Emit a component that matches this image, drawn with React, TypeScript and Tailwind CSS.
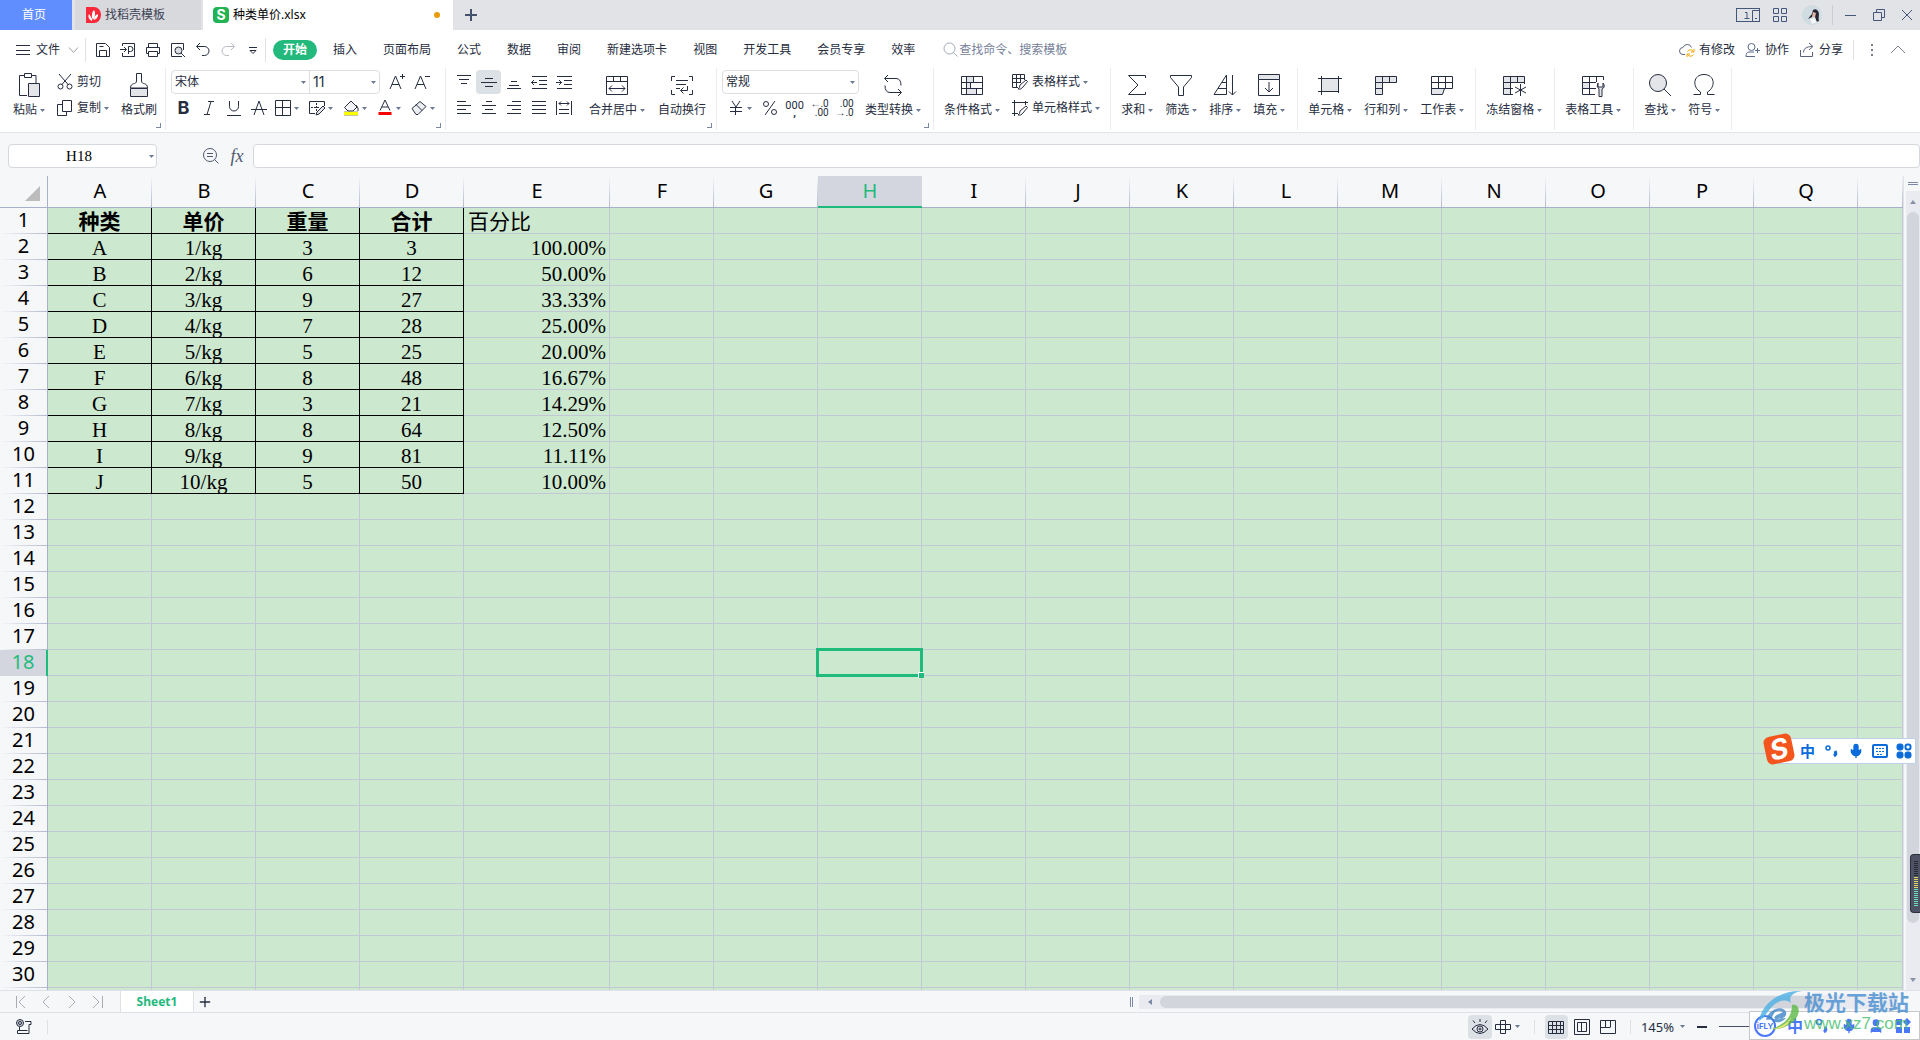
import type { ReactNode } from 'react';
import { Mic, Plus, User } from 'lucide-react';

const columns = ['A', 'B', 'C', 'D', 'E', 'F', 'G', 'H', 'I', 'J', 'K', 'L', 'M', 'N', 'O', 'P', 'Q', ''];

const data = [
  ['种类', '单价', '重量', '合计', '百分比'],
  ['A', '1/kg', '3', '3', '100.00%'],
  ['B', '2/kg', '6', '12', '50.00%'],
  ['C', '3/kg', '9', '27', '33.33%'],
  ['D', '4/kg', '7', '28', '25.00%'],
  ['E', '5/kg', '5', '25', '20.00%'],
  ['F', '6/kg', '8', '48', '16.67%'],
  ['G', '7/kg', '3', '21', '14.29%'],
  ['H', '8/kg', '8', '64', '12.50%'],
  ['I', '9/kg', '9', '81', '11.11%'],
  ['J', '10/kg', '5', '50', '10.00%'],
];

const menus = ['开始', '插入', '页面布局', '公式', '数据', '审阅', '新建选项卡', '视图', '开发工具', '会员专享', '效率'];

type IconProps = { children: ReactNode; size?: 'sm' | 'lg'; className?: string };

// sm icons are drawn on a 16 grid, lg icons on a 24 grid
function Icon({ children, size = 'sm', className = 'text-[#262d40]' }: IconProps) {
  const box = size === 'lg' ? 24 : 16;
  return (
    <svg
      width={box}
      height={box}
      viewBox={`0 0 ${box} ${box}`}
      fill="none"
      stroke="currentColor"
      className={`shrink-0 ${className}`}
      aria-hidden="true"
    >
      {children}
    </svg>
  );
}

function Arrow() {
  return (
    <svg width="5" height="3" viewBox="0 0 5 3" className="shrink-0 fill-[#6b7894]" aria-hidden="true">
      <path d="M0 0h5L2.5 3z" />
    </svg>
  );
}

function Group({ children, className = 'pl-2.5 pr-3', corner = false }: { children: ReactNode; className?: string; corner?: boolean }) {
  return (
    <div className={`relative flex h-[62px] shrink-0 items-start border-r border-[#ebecef] ${className}`}>
      {children}
      {corner && <span className="absolute bottom-0.5 right-1 h-[5px] w-[5px] border-b border-r border-[#7c87a0]" />}
    </div>
  );
}

function BigButton({ label, arrow = true, children }: { label: string; arrow?: boolean; children: ReactNode }) {
  return (
    <button className="flex shrink-0 flex-col items-center gap-[5px] pt-[5px]">
      <Icon size="lg">{children}</Icon>
      <span className="flex items-center gap-[3px] whitespace-nowrap">
        {label}
        {arrow && <Arrow />}
      </span>
    </button>
  );
}

function RowButton({ label, arrow = true, children }: { label: string; arrow?: boolean; children: ReactNode }) {
  return (
    <button className="flex h-6 items-center gap-1 whitespace-nowrap">
      <Icon>{children}</Icon>
      <span className="flex items-center gap-[3px]">
        {label}
        {arrow && <Arrow />}
      </span>
    </button>
  );
}

function Tool({ label, active = false, children }: { label: string; active?: boolean; children: ReactNode }) {
  return (
    <button
      aria-label={label}
      className={`flex h-6 w-[25px] shrink-0 items-center justify-center rounded-sm ${active ? 'bg-[#dce1e6]' : ''}`}
    >
      {children}
    </button>
  );
}

function DropTool({ label, children }: { label: string; children: ReactNode }) {
  return (
    <button aria-label={label} className="flex h-6 shrink-0 items-center gap-[3px]">
      {children}
      <Arrow />
    </button>
  );
}

function Select({ label, options, className }: { label: string; options: string[]; className: string }) {
  return (
    <div className={`flex items-center pr-[3px] ${className}`}>
      <select aria-label={label} className="w-full min-w-0 appearance-none bg-transparent pl-[3px] outline-none">
        {options.map((o) => (
          <option key={o}>{o}</option>
        ))}
      </select>
      <Arrow />
    </div>
  );
}

function TitleBar() {
  return (
    <header className="flex h-[30px] shrink-0 items-stretch bg-[#e1e3e7]">
      <button className="w-[72px] bg-[#618eff] pr-1 text-white">首页</button>
      <button className="ml-[3px] flex w-[126px] items-center gap-[3px] bg-[#d8d9dd] pl-[10px] text-[#3c4254]">
        <svg width="17" height="16" viewBox="0 0 17 16" aria-hidden="true">
          <path d="M1 0h8a7 8 0 0 1 0 16H1z" fill="#fa2839" />
          <path d="M7 14C3 12 3 9 4 7c1 1 2 3 3 5zM8 13C6 9 7 5 9 3c2 3 1 7-1 10zM9 13c0-3 1-5 4-6 0 3-1 5-4 6z" fill="#fff" />
        </svg>
        找稻壳模板
      </button>
      <button className="ml-0.5 flex w-[250px] items-center gap-1 bg-white pl-[10px] text-black">
        <span className="flex h-4 w-4 items-center justify-center rounded-sm bg-[#1fb354] font-[Inter] text-sm leading-4 font-bold text-white">
          S
        </span>
        种类单价.xlsx
        <span className="ml-auto mr-[13px] h-1.5 w-1.5 rounded-full bg-[#e89b06]" />
      </button>
      <button aria-label="新建标签" className="ml-1.5 flex w-6 items-center justify-center text-[#44506c]">
        <Icon className="text-[#44506c]"><path d="M8 2v12M2 8h12" strokeWidth="2" /></Icon>
      </button>
      <div className="ml-auto flex items-center text-[#44567a]">
        <button aria-label="窗口">
          <svg width="24" height="14" viewBox="0 0 24 14" fill="none" stroke="currentColor" aria-hidden="true">
            <rect x=".5" y=".5" width="23" height="13" />
            <path d="M9 4.500h2v6M8.500 10.500h5M16.500 13V2.500h7M19 10.500h2" />
          </svg>
        </button>
        <button aria-label="应用" className="ml-3">
          <Icon className="text-[#44567a]">
            <path d="M1.500 1.500h5v5h-5zM9.500 1.500h5v5h-5zM1.500 9.500h5v5h-5zM9.500 9.500h5v5h-5z" />
          </Icon>
        </button>
        <button aria-label="账号" className="ml-3.5">
          <svg width="20" height="20" viewBox="0 0 20 20" aria-hidden="true">
            <circle cx="10" cy="10" r="10" fill="#cfdde2" />
            <path d="M11 5q3-2 5 1c2 3 0 6 1 10l-3 1-1-6-3 1-4 2q2-3 4-5z" fill="#262531" />
            <path d="M11 7l3 1-1 4-3 0z" fill="#e5b7a6" />
            <path d="M8 14l5-1 2 4-5 2z" fill="#f4f6f7" />
          </svg>
        </button>
        <span className="mx-2.5 h-5 w-px bg-[#c9ccd3]" />
        <button aria-label="最小化" className="w-7"><Icon className="text-[#44567a]"><path d="M2 8.500h11" /></Icon></button>
        <button aria-label="还原" className="w-7">
          <Icon className="text-[#44567a]"><path d="M2.500 5.500h8v8h-8zM5.500 5.500v-3h8v8h-3" /></Icon>
        </button>
        <button aria-label="关闭" className="w-[21px]">
          <Icon className="text-[#44567a]"><path d="M3 3l10 10M13 3L3 13" /></Icon>
        </button>
      </div>
    </header>
  );
}

function MenuBar() {
  return (
    <nav className="flex h-[38px] shrink-0 items-center bg-white pt-0.5">
      <button className="flex items-center gap-[5px] pl-[15px]">
        <Icon><path d="M1 3.500h14M1 8.500h14M1 12.500h14" /></Icon>
        文件
        <Icon className="text-[#9a9fab]"><path d="M4 5.500l4.500 5 4.500-5" /></Icon>
      </button>
      <span className="mx-1 h-6 w-px bg-[#dfe1e5]" />
      <Tool label="保存">
        <Icon><path d="M1.500 1.500h9l4 4v9h-13zM4.500 14V8.500h7V14M4.500 4.500h4" /></Icon>
      </Tool>
      <Tool label="输出为PDF">
        <Icon><path d="M2.500 4V1.500h12v13h-12V11M0 7.500h6M4 5l2.500 2.500L4 10M8.500 12V4.500h2a2 2 0 0 1 0 5h-2" /></Icon>
      </Tool>
      <Tool label="打印">
        <Icon><path d="M3.500 5V1.500h9V5M3.500 11.500h-2v-6h13v6h-2M3.500 9.500h9v5h-9z" /></Icon>
      </Tool>
      <Tool label="打印预览">
        <Icon><path d="M12 14.500H1.500v-13h12V8" /><circle cx="8.500" cy="8.500" r="3.500" fill="#dedfe3" /><path d="M11 11l4 4" /></Icon>
      </Tool>
      <Tool label="撤销"><Icon><path d="M5 1L1.500 4.500 5 8M2 4.500h7.500a4.500 4.500 0 0 1 0 9H7" /></Icon></Tool>
      <Tool label="恢复">
        <Icon className="text-[#b9bcc4]"><path d="M11 1l3.500 3.500L11 8M14 4.500H6.500a4.500 4.500 0 0 0 0 9H9" /></Icon>
      </Tool>
      <Tool label="更多"><Icon><path d="M4 5.500h8M5 8.500l3 3 3-3z" /></Icon></Tool>
      <span className="mr-[17px] h-6 w-px bg-[#dfe1e5]" />
      <div className="flex items-center gap-[26px]">
        {menus.map((m, i) => (
          <button
            key={m}
            className={i === 0 ? '-mx-2.5 h-5 rounded-full bg-[#23b97c] px-2.5 font-bold text-white' : 'whitespace-nowrap'}
          >
            {m}
          </button>
        ))}
      </div>
      <button className="ml-7 flex items-center whitespace-nowrap text-[#76809a]">
        <Icon className="text-[#a0a8b8]"><circle cx="6.500" cy="6.500" r="5.500" /><path d="M10.500 10.500l4 4" /></Icon>
        查找命令、搜索模板
      </button>
      <div className="ml-auto flex items-center gap-2.5 pr-[14px]">
        <button className="flex items-center gap-1">
          <Icon>
            <path d="M6 12.500H4a3.500 3.500 0 0 1 0-7 4.500 4.500 0 0 1 8.500 0" stroke="#5a6478" />
            <path d="M8.500 9.500a3.500 3.500 0 0 1 6 0M15 7v3h-3M14.500 12.500a3.500 3.500 0 0 1-6 0M8 15v-3h3" stroke="#f5a300" />
          </Icon>
          有修改
        </button>
        <button className="flex items-center gap-1">
          <Icon className="text-[#5a6a88]"><circle cx="6.500" cy="5" r="3.500" /><path d="M9 10H4q-3 0-3 4.500h9M10 8.500h5M12.500 6v5" /></Icon>
          协作
        </button>
        <button className="flex items-center gap-1">
          <Icon className="text-[#5a6478]"><path d="M1.500 8v6.500h12V10M4.500 10.500q0-6 8.500-6M10 1l4 3.500L10 8" /></Icon>
          分享
        </button>
        <span className="h-5 w-px bg-[#dfe1e5]" />
        <button aria-label="更多选项"><Icon><path d="M7 3h2M7 8h2M7 13h2" strokeWidth="2" stroke="#7a7f8b" /></Icon></button>
        <button aria-label="收起功能区"><Icon className="text-[#7a7f8b]"><path d="M1 11l7-7 7 7" /></Icon></button>
      </div>
    </nav>
  );
}

function Ribbon() {
  return (
    <div className="relative flex h-16 shrink-0 overflow-hidden bg-white">
      <Group className="gap-3 pl-[13px] pr-2" corner>
        <BigButton label="粘贴">
          <path d="M8 2.500H2.500v20H10M17 2.500h2V10M7.500.500h7v4h-7zM14 2.500h5" />
          <path d="M11.500 10.500h11v13h-11z" fill="#e3e5e9" />
        </BigButton>
        <div className="flex flex-col gap-0.5 pt-0.5">
          <RowButton label="剪切" arrow={false}>
            <path d="M2 0l9.500 11M14 0L4.500 11" /><circle cx="3.500" cy="12.500" r="2.500" /><circle cx="12.500" cy="12.500" r="2.500" />
          </RowButton>
          <RowButton label="复制"><path d="M5.500 4.500h-5v11h9v-4M5.500.500h9v11h-9z" /></RowButton>
        </div>
        <BigButton label="格式刷" arrow={false}>
          <path d="M9.500 8V.500h5V8c0 4 6 1 6 7H3.500c0-6 6-3 6-7z" />
          <path d="M3.500 15.500h17v8h-17z" fill="#e3e5e9" />
        </BigButton>
      </Group>

      <Group className="flex-col gap-0.5 pl-[5px] pr-2.5 pt-0.5" corner>
        <div className="flex items-center">
          <div className="mr-1 flex h-6 w-[209px] shrink-0 items-stretch rounded-sm border border-[#dcdee4]">
            <Select label="字体" options={['宋体', '黑体', '楷体']} className="flex-1" />
            <Select label="字号" options={['11', '12', '14']} className="w-[70px] border-l border-[#dcdee4] font-[Inter] text-sm" />
          </div>
          <Tool label="增大字号">
            <Icon><path d="M1 15L6.500 2 12 15M3 10.500h7M11 2.500h5M13.500 0v5" /></Icon>
          </Tool>
          <Tool label="减小字号"><Icon><path d="M1 15L6.500 2 12 15M3 10.500h7M11 2.500h5" /></Icon></Tool>
        </div>
        <div className="flex items-center">
          <Tool label="加粗"><span className="font-[Inter] text-lg leading-6 font-bold">B</span></Tool>
          <Tool label="倾斜"><Icon><path d="M7 1.500h6M3 14.500h6M10 1.500L6 14.500" /></Icon></Tool>
          <Tool label="下划线"><Icon><path d="M3.500 1v5.500a4.500 4.500 0 0 0 9 0V1M1 15.500h14" /></Icon></Tool>
          <Tool label="删除线"><Icon><path d="M3 15L8 1l5 14M0 9.500h16" /></Icon></Tool>
          <div className="ml-1 flex gap-2.5">
            <DropTool label="边框"><Icon><path d="M.500.500h15v15H.500zM7.500 1v14M1 7.500h14" /></Icon></DropTool>
            <DropTool label="绘图边框">
              <Icon><path d="M15.500 6V1.500H.500v12H6" /><path d="M7.500 3v8M2 7.500h9" strokeDasharray="2 1" /><path d="M7 15l1-3 6-6 2 2-6 6z" fill="#e3e5e9" /></Icon>
            </DropTool>
            <DropTool label="填充颜色">
              <Icon><path d="M3 6l5-5 6 6-4 4H5L1.500 7.500z" fill="#f3f4f6" /><path d="M13 5q3 3 2 6" /><path d="M1 13.500h14" stroke="#8a8c50" strokeWidth="4" /><path d="M1 13.500h14" stroke="#fafa00" strokeWidth="3" /></Icon>
            </DropTool>
            <DropTool label="字体颜色">
              <Icon><path d="M3 10.500L8 0l5 10.500M5 7h6" /><path d="M1.500 13.500h13" stroke="#fa0000" strokeWidth="3" /></Icon>
            </DropTool>
            <DropTool label="清除"><Icon><path d="M1 8.500L9 1.500l6 5-8 8H5z" fill="#eceef1" /><path d="M5 4.500l6 6" /></Icon></DropTool>
          </div>
        </div>
      </Group>

      <Group className="gap-[13px] pl-[5px] pr-2.5" corner>
        <div className="grid grid-cols-5 gap-y-0.5 pt-0.5">
          <Tool label="顶端对齐"><Icon><path d="M1 1.500h14M3 5.500h10M5 9.500h6" /></Icon></Tool>
          <Tool label="垂直居中" active><Icon><path d="M4 4.500h8M0 8.500h16M4 12.500h8" /></Icon></Tool>
          <Tool label="底端对齐"><Icon><path d="M5 7.500h6M3 11.500h10M1 14.500h14" /></Icon></Tool>
          <Tool label="减少缩进"><Icon><path d="M1 2.500h15M8 6.500h8M8 10.500h8M1 14.500h15M6 8.500H0M3 6L.500 8.500 3 11" /></Icon></Tool>
          <Tool label="增加缩进"><Icon><path d="M1 2.500h15M8 6.500h8M8 10.500h8M1 14.500h15M0 8.500h6M3 6l2.500 2.500L3 11" /></Icon></Tool>
          <Tool label="左对齐"><Icon><path d="M1 1.500h9M1 5.500h14M1 9.500h9M1 13.500h14" /></Icon></Tool>
          <Tool label="水平居中"><Icon><path d="M5 1.500h6M1 5.500h14M4 9.500h8M1 13.500h14" /></Icon></Tool>
          <Tool label="右对齐"><Icon><path d="M6 1.500h9M1 5.500h14M6 9.500h9M1 13.500h14" /></Icon></Tool>
          <Tool label="两端对齐"><Icon><path d="M1 1.500h14M1 5.500h14M1 9.500h14M1 13.500h14" /></Icon></Tool>
          <Tool label="分散对齐"><Icon><path d="M.500 1v14M15.500 1v14M3 3.500h10M5 1.500l-2 2 2 2M11 1.500l2 2-2 2M3 9.500h10M3 13.500h10" /></Icon></Tool>
        </div>
        <BigButton label="合并居中">
          <path d="M1.500 3.500h21v18h-21zM1 8.500h22M8.500 3v6M15.500 3v6M4 15.500h16M7 12.500l-3 3 3 3M17 12.500l3 3-3 3" />
        </BigButton>
        <BigButton label="自动换行" arrow={false}>
          <path d="M5 3.500H1.500V8M19 3.500h3.500V8M5 21.500H1.500V17M19 21.500h3.500V17M6 7.500h12M6 11.500h10M6 15.500h4M17.500 13v4.500H11M13.500 14.500l-3 3 3 3" />
        </BigButton>
      </Group>

      <Group className="gap-1.5 pl-[5px] pr-3" corner>
        <div className="flex flex-col gap-0.5 pt-0.5">
          <div className="flex h-6 w-[137px] items-stretch rounded-sm border border-[#dcdee4]">
            <Select label="数字格式" options={['常规', '数值', '货币']} className="flex-1" />
          </div>
          <div className="flex items-center">
            <div className="w-[35px] pl-1.5">
              <DropTool label="货币"><Icon><path d="M4 1l4 6 4-6M7.500 7v8M2 7.500h12M2 11.500h12" /></Icon></DropTool>
            </div>
            <Tool label="百分比样式">
              <Icon><circle cx="4" cy="4" r="2.500" /><circle cx="12" cy="12" r="2.500" /><path d="M13 1L3 15" /></Icon>
            </Tool>
            <Tool label="千位分隔">
              <span className="flex flex-col items-center font-[Roboto] text-[11px] leading-[9px]"><span>000</span><span className="leading-[5px] font-bold">,</span></span>
            </Tool>
            <Tool label="增加小数位数">
              <span className="flex flex-col items-end font-[Roboto] text-[10px] leading-[9px]"><span>←.0</span><span>.00</span></span>
            </Tool>
            <Tool label="减少小数位数">
              <span className="flex flex-col items-end font-[Roboto] text-[10px] leading-[9px]"><span>.00</span><span>→.0</span></span>
            </Tool>
          </div>
        </div>
        <BigButton label="类型转换">
          <path d="M7 2L3.500 5.500 7 9M4 5.500h11q5 0 5 7M17 16l3.500 3.500L17 23M20 19.500H9q-5 0-5-7" />
        </BigButton>
      </Group>

      <Group className="gap-3 pl-2.5 pr-2.5">
        <BigButton label="条件格式">
          <path d="M7 4h6v5H7zM7 10h3v5H7zM7 16h9v5H7z" fill="#e3e5e9" stroke="none" />
          <path d="M1.500 3.500h21v18h-21zM1 9.500h22M1 15.500h22M6.500 3v19M13.500 3v6M10.500 9v6M16.500 15v6" />
        </BigButton>
        <div className="flex flex-col items-start gap-0.5 pt-0.5">
          <RowButton label="表格样式">
            <path d="M6 13.500H.500V.500h12V6M1 4.500h12M1 8.500h8M4.500 1v12M8.500 1v7" />
            <path d="M8 11l6-5 1.500 1.500L11 13q-2 3-5 2 2-1 2-4z" fill="#fff" />
          </RowButton>
          <RowButton label="单元格样式">
            <path d="M0 2.500h16M2.500 0v16M0 13.500h6M13.500 1v4" />
            <path d="M8 11l6-5 1.500 1.500L11 13q-2 3-5 2 2-1 2-4z" fill="#fff" />
          </RowButton>
        </div>
      </Group>

      <Group className="gap-3 pl-2.5 pr-3">
        <BigButton label="求和"><path d="M20.500 5V2.500h-17L13 12 3.500 21.500h17V19" /></BigButton>
        <BigButton label="筛选"><path d="M1.500 2.500h21v2L14.500 14v8.500h-5V14L1.500 4.500z" /></BigButton>
        <BigButton label="排序"><path d="M1 21.500L13.500 2v19.500zM5 15.500h8M9 9.500h4M19.500 2v20M16 18.500l3.500 3.500 3.500-3.500" /></BigButton>
        <BigButton label="填充">
          <path d="M1.500 1.500h21v5h-21z" fill="#e3e5e9" /><path d="M1.500 6.500v16h21v-16M12 9v10M8 15l4 4 4-4" />
        </BigButton>
      </Group>

      <Group className="gap-3 pl-2.5 pr-[11px]">
        <BigButton label="单元格">
          <path d="M3.500 5.500h17v13h-17z" fill="#e3e5e9" /><path d="M0 5.500h24M0 18.500h20M3.500 3v19M20.500 3v14M20.500 18v2" />
        </BigButton>
        <BigButton label="行和列">
          <path d="M1.500 3.500h21v6h-14v12h-7z" fill="#e3e5e9" /><path d="M1.500 9.500h7v-6M15.500 3v6M1 15.500h7" />
        </BigButton>
        <BigButton label="工作表">
          <path d="M1.500 15.500h13l-2 6h-11z" fill="#e3e5e9" /><path d="M1.500 3.500h21v12h-21zM1 9.500h22M8.500 3v12M15.500 3v12" />
        </BigButton>
      </Group>

      <Group>
        <BigButton label="冻结窗格">
          <path d="M1.500 3.500h21v6h-14v12h-7z" fill="#e3e5e9" stroke="none" />
          <path d="M22.500 11V3.500h-21v18H11M1 9.500h21M1 15.500h10M8.500 3v18M15.500 3v6M18.500 11v12M13 14l11 6M24 14l-11 6" />
        </BigButton>
      </Group>

      <Group>
        <BigButton label="表格工具">
          <path d="M1.500 9.500h7v6h-7z" fill="#e3e5e9" />
          <path d="M22.500 7V3.500h-21v18H14M1 9.500h14M1 15.500h14M8.500 3v18M15.500 3v6" />
          <path d="M17 10q-2 4 1 6v7.500h3V16q4-2 1-6v4h-5z" fill="#e3e5e9" />
        </BigButton>
      </Group>

      <Group className="gap-3 pl-2.5 pr-[11px]">
        <BigButton label="查找"><circle cx="10" cy="10" r="8.500" fill="#e3e5e9" /><path d="M16 16l7 7" /></BigButton>
        <BigButton label="符号">
          <path d="M1.500 21.500h7V19C0 14 1 1.500 12 1.500S24 14 15.500 19v2.500h7" />
        </BigButton>
      </Group>
    </div>
  );
}

function FormulaBar() {
  return (
    <div className="flex h-11 shrink-0 items-center border-t border-[#e3e4e6] bg-[#f5f7f9] pt-[3px] pl-2">
      <div className="flex h-6 w-[149px] shrink-0 items-center rounded-sm border border-[#d5d8de] bg-white pr-0.5">
        <input
          aria-label="名称框"
          defaultValue="H18"
          className="w-full min-w-0 text-center font-['Liberation_Serif',serif] text-[15px] text-black outline-none"
        />
        <button aria-label="选择名称"><Arrow /></button>
      </div>
      <button aria-label="浏览公式" className="ml-[46px]">
        <Icon className="text-[#50596e]"><circle cx="7" cy="7" r="6.500" /><path d="M11.500 11.500l4 4M4 5.500h6M4 8.500h6" /></Icon>
      </button>
      <button className="ml-2.5 mr-2 w-4 font-['Liberation_Serif',serif] text-lg leading-6 italic text-[#50596e]">fx</button>
      <input aria-label="编辑栏" className="h-6 min-w-0 flex-1 rounded-sm border border-[#d5d8de] bg-white px-2 outline-none" />
    </div>
  );
}

function cellClass(row: number, col: number) {
  const filled = row <= 11 && col < 4;
  let cls = 'h-[26px] border-r border-b p-0 pt-[3px] leading-[22px] ';
  cls += filled ? 'border-black text-center ' : 'border-[#c3c8d6] ';
  if (col === 4) cls += row === 1 ? 'pl-1 text-left ' : 'pr-[3px] text-right ';
  if (row === 1 && col < 4) cls += 'font-bold ';
  return cls;
}

function Grid() {
  const rows = Array.from({ length: 31 }, (_, i) => i + 1);
  return (
    <div className="min-w-0 flex-1 overflow-hidden border-r border-[#e0e2e8] bg-[#cce8cf]">
      <table className="w-full table-fixed border-separate border-spacing-0 font-['Liberation_Serif','Noto_Sans_CJK_SC',serif] text-[21px] text-black">
        <colgroup>
          <col className="w-12" />
          {columns.map((c, i) => (
            <col key={i} className={c === 'E' ? 'w-[146px]' : c ? 'w-[104px]' : ''} />
          ))}
        </colgroup>
        <thead className="font-['Noto_Sans',sans-serif] text-xl leading-7">
          <tr>
            <th className="h-8 border-r border-b border-[#a9b0cc] bg-[#f5f7f9] p-0 pr-[7px]">
              <svg width="15" height="15" viewBox="0 0 15 15" className="mt-1 ml-auto fill-[#bcbcbc]" aria-label="全选">
                <path d="M15 0v15H0z" />
              </svg>
            </th>
            {columns.map((c, i) => (
              <th
                key={i}
                className={
                  c === 'H'
                    ? 'h-8 border-b-2 border-[#1fbb7d] bg-[#d3d6de] p-0 font-normal text-[#1fbb7d]'
                    : 'h-8 border-b border-[#a9b0cc] bg-[#f5f7f9] bg-[linear-gradient(to_bottom,transparent,#b4bad0)] bg-[length:1px_100%] bg-right bg-no-repeat p-0 pb-px font-normal'
                }
              >
                {c}
              </th>
            ))}
          </tr>
        </thead>
        <tbody>
          {rows.map((r) => (
            <tr key={r}>
              <th
                className={
                  r === 18
                    ? "h-[26px] border-r-2 border-[#1fbb7d] bg-[#d3d6de] p-0 pb-[3px] font-['Noto_Sans',sans-serif] text-xl leading-[23px] font-normal text-[#1fbb7d]"
                    : "h-[26px] border-r border-[#a9b0cc] bg-[#f5f7f9] bg-[linear-gradient(to_right,transparent,#b4bad0)] bg-[length:100%_1px] bg-bottom bg-no-repeat p-0 pb-[3px] font-['Noto_Sans',sans-serif] text-xl leading-[23px] font-normal"
                }
              >
                {r < 31 ? r : ''}
              </th>
              {columns.map((c, i) => (
                <td key={i} className={cellClass(r, i) + (r === 18 && c === 'H' ? 'relative' : '')}>
                  {data[r - 1]?.[i]}
                  {r === 18 && c === 'H' && (
                    <div className="absolute -top-0.5 -left-0.5 -right-0.5 -bottom-0.5 border-[3px] border-[#1fbb7d]">
                      <span className="absolute -right-1 -bottom-1 h-1.5 w-1.5 border-t border-l border-white bg-[#1fbb7d]" />
                    </div>
                  )}
                </td>
              ))}
            </tr>
          ))}
        </tbody>
      </table>
    </div>
  );
}

function VerticalScroll() {
  return (
    <div className="flex w-4 shrink-0 flex-col bg-[#f5f7f9] pl-0.5">
      <div className="mx-0.5 mt-1.5 mb-1.5 h-[3px] border-y border-[#7c8aa5]" />
      <div className="flex flex-1 flex-col items-center bg-[#e9ebf0]">
        <button aria-label="向上滚动" className="flex h-[21px] items-center">
          <svg width="6" height="4" viewBox="0 0 6 4" className="fill-[#8893ab]"><path d="M3 0l3 4H0z" /></svg>
        </button>
        <div className="w-3 flex-[712] rounded-full bg-[#d3d5dd]" />
        <div className="flex-[47]" />
        <button aria-label="向下滚动" className="flex h-5 items-center">
          <svg width="6" height="4" viewBox="0 0 6 4" className="fill-[#8893ab]"><path d="M0 0h6L3 4z" /></svg>
        </button>
      </div>
    </div>
  );
}

function SheetBar() {
  return (
    <div className="flex h-[23px] shrink-0 items-center border-y border-[#dfe1e6] bg-[#f5f7f9]">
      <div className="flex items-center gap-[10px] pl-3">
        <button aria-label="第一张"><Icon className="text-[#a8abb3]"><path d="M4.500 2v12M13 2L7 8l6 6" /></Icon></button>
        <button aria-label="上一张"><Icon className="text-[#a8abb3]"><path d="M11 2L5 8l6 6" /></Icon></button>
        <button aria-label="下一张"><Icon className="text-[#a8abb3]"><path d="M5 2l6 6-6 6" /></Icon></button>
        <button aria-label="最后一张"><Icon className="text-[#a8abb3]"><path d="M3 2l6 6-6 6M12.500 2v12" /></Icon></button>
      </div>
      <button className="ml-3.5 h-[21px] w-[74px] border-x border-[#dfe1e6] bg-white font-['Noto_Sans',sans-serif] font-bold text-[#23b97c]">
        Sheet1
      </button>
      <button aria-label="新建工作表" className="ml-[3px]"><Plus className="h-4 w-4 text-[#262d40]" strokeWidth={2} /></button>
      <div className="ml-auto mr-[22px] flex w-2/5 items-center gap-1.5">
        <span className="h-2.5 w-[3px] shrink-0 border-x border-[#7c8aa5]" />
        <div className="flex h-3.5 flex-1 items-center bg-[#e9ebf0]">
          <button aria-label="向左滚动" className="flex w-[21px] justify-center">
            <svg width="4" height="6" viewBox="0 0 4 6" className="fill-[#7c8aa5]"><path d="M4 0v6L0 3z" /></svg>
          </button>
          <div className="h-3 w-[87%] rounded-full bg-[#d3d5dd]" />
        </div>
      </div>
    </div>
  );
}

function StatusBar() {
  return (
    <div className="flex h-[27px] shrink-0 items-center bg-[#f5f7f9] pr-[169px] font-['Noto_Sans',sans-serif]">
      <button aria-label="宏" className="ml-4">
        <Icon><circle cx="4" cy="4" r="3.500" fill="#cfd2d8" /><circle cx="4" cy="4" r="1.500" /><path d="M9 2.500h6v3h-2v9H1.500v-3h10M3.500 8v3" /></Icon>
      </button>
      <span className="ml-[15px] h-3.5 w-px bg-[#dfe1e6]" />
      <div className="ml-auto flex items-center">
        <button aria-label="护眼模式" className="flex h-6 w-6 items-center justify-center rounded-sm bg-[#dce1e6]">
          <Icon><path d="M0 10q8-9 16 0-8 9-16 0z" /><circle cx="8" cy="10" r="3" /><circle cx="8" cy="10" r="1" /><path d="M8 3V0M3 4L1 1.500M13 4l2-2.500" /></Icon>
        </button>
        <button aria-label="阅读模式" className="ml-[3px] flex items-center gap-1">
          <Icon><path d="M5.500 1.500h5v13h-5zM.500 5.500h15v5H.500z" /></Icon>
          <Arrow />
        </button>
        <span className="ml-3.5 mr-2.5 h-3.5 w-px bg-[#dfe1e6]" />
        <button aria-label="普通视图" className="flex h-6 w-[23px] items-center justify-center rounded-sm bg-[#dce1e6]">
          <Icon><path d="M.500 2.500h15v12H.500zM0 6.500h16M0 10.500h16M4.500 2v12M8.500 2v12M12.500 2v12" /></Icon>
        </button>
        <button aria-label="分页预览" className="ml-1.5">
          <Icon><path d="M.500.500h15v15H.500zM3.500 3.500h9v9h-9zM7.500 3v10" /></Icon>
        </button>
        <button aria-label="页面布局视图" className="ml-2.5">
          <Icon><path d="M.500 1.500h15v13H.500zM5.500 2v6M10.500 2v6M0 8.500h10.500" /></Icon>
        </button>
        <span className="ml-3.5 mr-2.5 h-3.5 w-px bg-[#dfe1e6]" />
        <button className="flex items-center gap-1.5 text-[13px] text-[#262d40]">145%<Arrow /></button>
        <button aria-label="缩小" className="ml-3 flex h-4 items-center"><span className="h-0.5 w-2.5 bg-[#262d40]" /></button>
        <span className="ml-3 h-px w-8 bg-[#44506c]" />
      </div>
    </div>
  );
}

// Floating input-method toolbar docked over the sheet
function SogouBar() {
  return (
    <div className="absolute top-[738px] right-1 flex h-[26px] w-[140px] items-center gap-2 border border-[#bcd0ea] bg-white pl-[23px] text-[#0a6cdb]">
      <span className="absolute -top-1 -left-3 flex h-7 w-7 -rotate-12 items-center justify-center rounded-md bg-[#f4551c] font-[Inter] text-[28px] leading-7 font-bold text-white italic">
        S
      </span>
      <span className="w-4 text-[15px] leading-6 font-bold">中</span>
      <Icon className="text-[#0a6cdb]"><circle cx="4" cy="5" r="2" strokeWidth="1.500" /><path d="M11 8q2 3-1 5" strokeWidth="3" /></Icon>
      <Mic className="h-4 w-4 shrink-0 fill-current" />
      <Icon className="text-[#0a6cdb]">
        <rect x="1" y="2" width="14" height="12" rx="1" strokeWidth="2" />
        <path d="M4 5.500h8M4 8.500h8M5 11.500h6" strokeDasharray="2 1" />
      </Icon>
      <Icon className="text-[#0a6cdb]">
        <rect x="1" y="1" width="6" height="6" rx="2" fill="currentColor" /><rect x="9.500" y="1.500" width="5" height="5" rx="2" strokeWidth="2" />
        <rect x="1" y="9" width="6" height="6" rx="2" fill="currentColor" /><rect x="9" y="9" width="6" height="6" rx="2" fill="currentColor" />
      </Icon>
    </div>
  );
}

function LevelMeter() {
  return (
    <div className="absolute top-[854px] right-0 flex h-[59px] w-2.5 flex-col items-end justify-center gap-px rounded-l-sm border border-r-0 border-[#2c303c] bg-[#4d5364] pr-0.5">
      {Array.from({ length: 23 }, (_, i) => (
        <span key={i} className={`h-px w-1 ${i < 8 ? 'bg-[#262a34]' : i < 14 ? 'bg-[#e3d467]' : 'bg-[#6fdcb8]'}`} />
      ))}
    </div>
  );
}

function IflyBar() {
  return (
    <div className="absolute right-0 bottom-0 flex h-[29px] w-[171px] items-center justify-between border border-[#c6c7ca] bg-white pr-2 pl-1 text-[#4a78f8]">
      <span className="flex h-[22px] w-[22px] items-center justify-center rounded-full border-2 border-current font-[Inter] text-[8px] leading-3 font-bold">
        iFLY
      </span>
      <span className="text-base leading-6 font-bold">中</span>
      <Icon className="text-[#4a78f8]"><circle cx="5" cy="4" r="2.500" strokeWidth="1.500" /><path d="M11 9q2 3-1 5" strokeWidth="3" /></Icon>
      <Mic className="h-4 w-4 fill-current" />
      <User className="h-4 w-4 fill-current" />
      <Icon className="text-[#4a78f8]">
        <path d="M1 1h6v6H1zM1 9h6v6H1zM9 9h6v6H9zM12 0l4 4-4 4-4-4z" fill="currentColor" stroke="none" />
      </Icon>
    </div>
  );
}

function Watermark() {
  return (
    <div className="pointer-events-none absolute right-2.5 bottom-1.5 flex items-center opacity-80">
      <svg width="46" height="44" viewBox="0 0 46 44" aria-hidden="true">
        <path d="M44 1C24 0 4 12 1 31c8-4 10-16 22-20 5-1 8 0 10 2C30 6 36 2 44 1z" fill="#4bb0e4" />
        <path d="M8 30c2-10 16-16 20-8 2 6-8 9-12 6 2-4 6-4 9-6-6-4-11 2-11 7 2 5 10 4 14-1" fill="#3f86c8" />
        <path d="M34 15c8-2 9 9 2 16-6 6-15 9-22 8 12-5 20-11 20-24z" fill="#5cb947" />
        <path d="M14 39c10-2 16-6 19-12-1 8-10 13-19 12z" fill="#e8e04e" />
      </svg>
      <div className="flex w-[106px] flex-col whitespace-nowrap">
        <span className="text-[21px] leading-6 font-bold text-[#478ed0]">极光下载站</span>
        <span className="font-['Liberation_Sans',sans-serif] text-[17px] leading-5 text-[#45bd6c]">www.xz7.com</span>
      </div>
    </div>
  );
}

export default function App() {
  return (
    <div className="relative flex h-screen flex-col overflow-hidden bg-[#f5f7f9] font-['Noto_Sans','Noto_Sans_CJK_SC',sans-serif] text-xs leading-4 text-[#262d40]">
      <TitleBar />
      <MenuBar />
      <Ribbon />
      <FormulaBar />
      <main className="flex min-h-0 flex-1">
        <Grid />
        <VerticalScroll />
      </main>
      <SheetBar />
      <StatusBar />
      <SogouBar />
      <LevelMeter />
      <IflyBar />
      <Watermark />
    </div>
  );
}
